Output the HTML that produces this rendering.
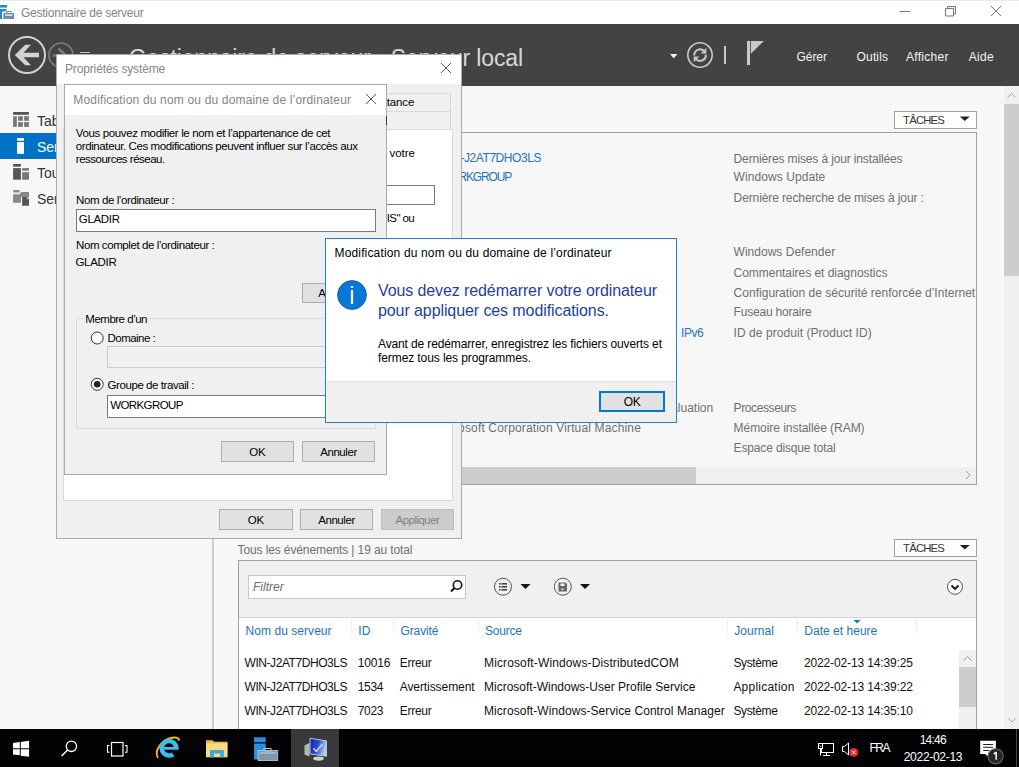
<!DOCTYPE html>
<html><head><meta charset="utf-8">
<style>
*{margin:0;padding:0;box-sizing:border-box}
html,body{width:1019px;height:767px;overflow:hidden;background:#f7f7f7;font-family:"Liberation Sans",sans-serif;font-size:12px;color:#000;position:relative}
.a{position:absolute}
.t{position:absolute;white-space:nowrap;line-height:1}
svg{position:absolute;overflow:visible}
</style></head><body>
<div class="a" style="left:0px;top:0px;width:1019px;height:24px;background:#fff"></div>
<div class="a" style="left:0px;top:0px;width:1019px;height:1px;background:#ececec"></div>
<svg style="left:0;top:0" width="16" height="24">
  <rect x="0" y="5" width="7" height="2.6" fill="#1e88dc"/>
  <path d="M0 9h7l-2 2.5h-3v7.5h-2z" fill="#1e88dc"/>
  <rect x="3.3" y="13" width="10.7" height="6" fill="#6d8ca5"/>
  <rect x="6.5" y="11.5" width="4.5" height="2" fill="none" stroke="#6d8ca5" stroke-width="1"/>
  <path d="M4.5 14.5h8.5l-1 1.2h-6.5z" fill="#fff"/>
</svg>
<div class="t" style="left:21px;top:6.54px;font-size:12px;color:#858585;;letter-spacing:-0.244px">Gestionnaire de serveur</div>
<svg style="left:890px;top:0" width="129" height="24">
  <path d="M10 11.5h10" stroke="#767676" stroke-width="1"/>
  <path d="M55.5 8.5h8v7.5h-8z M57.5 8.5v-2h8v7.5h-2" fill="none" stroke="#767676" stroke-width="1"/>
  <path d="M101 6l10 10M111 6l-10 10" stroke="#767676" stroke-width="1"/>
</svg>
<div class="a" style="left:0px;top:24px;width:1019px;height:62px;background:#434343"></div>
<svg style="left:0;top:24px" width="120" height="62">
  <circle cx="27" cy="31" r="18" fill="none" stroke="#d2d2d2" stroke-width="2"/>
  <path d="M14.8 31L25.3 20.8H31L23.5 28.7H39V33.3H23.5L31 41.2H25.3Z" fill="#d2d2d2"/>
  <circle cx="61" cy="31.2" r="12" fill="none" stroke="#7a7a7a" stroke-width="1.8"/>
  <path d="M52.5 31.5h14 M58.5 24.5l7.5 7" fill="none" stroke="#7a7a7a" stroke-width="2.6"/>
  <rect x="80" y="27.9" width="10" height="1.2" rx="0.5" fill="#c8c8c8"/>
</svg>
<div class="t" style="left:128.8px;top:46.53px;font-size:23px;color:#d8d8d8;;letter-spacing:-0.156px">Gestionnaire de serveur › Serveur local</div>
<svg style="left:660px;top:24px" width="120" height="62">
  <path d="M10 30h7.5l-3.75 4.2z" fill="#f2f2f2"/>
  <circle cx="40" cy="31" r="12.2" fill="none" stroke="#c9c9c9" stroke-width="1.6"/>
  <path d="M34.3 31.5A5.7 5.7 0 0 1 44.2 27.2" fill="none" stroke="#c9c9c9" stroke-width="2"/>
  <path d="M45.8 30.5A5.7 5.7 0 0 1 35.8 34.8" fill="none" stroke="#c9c9c9" stroke-width="2"/>
  <path d="M46.3 23.8v5.6h-5.6z" fill="#c9c9c9"/>
  <path d="M33.7 38.2v-5.6h5.6z" fill="#c9c9c9"/>
  <rect x="64" y="22" width="2" height="18" fill="#c9c9c9"/>
  <rect x="87" y="17" width="3" height="24" fill="#c9c9c9"/>
  <path d="M90.8 17h13l-13 12.8z" fill="#c9c9c9"/>
</svg>
<div class="t" style="left:796.5px;top:50.64px;font-size:12px;color:#f4f4f4;;letter-spacing:-0.047px">Gérer</div>
<div class="t" style="left:856.6px;top:50.64px;font-size:12px;color:#f4f4f4;;letter-spacing:0.142px">Outils</div>
<div class="t" style="left:906px;top:50.64px;font-size:12px;color:#f4f4f4;;letter-spacing:0.276px">Afficher</div>
<div class="t" style="left:968.8px;top:50.64px;font-size:12px;color:#f4f4f4;;letter-spacing:0.290px">Aide</div>
<div class="a" style="left:0px;top:86px;width:213px;height:643px;background:#f7f7f7"></div>
<div class="a" style="left:212px;top:86px;width:2px;height:643px;background:#cdcdcd"></div>
<div class="a" style="left:0px;top:133px;width:213px;height:26px;background:#0072c6"></div>
<svg style="left:0;top:0" width="40" height="220">
  <rect x="13.1" y="112" width="15.8" height="2.8" fill="#555"/>
  <rect x="13.1" y="116.2" width="3.7" height="10.7" fill="#777"/>
  <rect x="18.1" y="116.2" width="4.8" height="4.6" fill="#777"/><rect x="24.1" y="116.2" width="4.8" height="4.6" fill="#777"/>
  <rect x="18.1" y="122.1" width="4.8" height="4.8" fill="#777"/><rect x="24.1" y="122.1" width="4.8" height="4.8" fill="#777"/>
  <rect x="17" y="138" width="7" height="2.8" fill="#fff"/>
  <rect x="17" y="142" width="7" height="11.9" fill="#fff"/>
  <rect x="13.1" y="164" width="7.8" height="2.7" fill="#555"/>
  <rect x="13.1" y="168.1" width="7.8" height="11.6" fill="#555"/>
  <rect x="22.1" y="168.1" width="6.9" height="2.6" fill="#777"/>
  <rect x="22.1" y="172.2" width="6.9" height="7.5" fill="#777"/>
  <rect x="13.1" y="190" width="6.6" height="2.6" rx="1" fill="#888"/>
  <path d="M13.1 194.2h6.6l1.3-2.2h8v5h-8v5.8h-7.9z" fill="#888"/>
  <path d="M22.1 197h5l1.9 2v6.7h-6.9z" fill="#555"/>
  <path d="M26.8 197.6l1.6 1.6h-1.6z" fill="#fff"/>
</svg>
<div class="a" style="left:0;top:86px;width:213px;height:643px;overflow:hidden">
<div class="t" style="left:37px;top:28.15px;font-size:14px;color:#333;">Tableau de bord</div>
<div class="t" style="left:37px;top:54.15px;font-size:14px;color:#fff;">Serveur local</div>
<div class="t" style="left:37px;top:80.15px;font-size:14px;color:#333;">Tous les serveurs</div>
<div class="t" style="left:37px;top:106.15px;font-size:14px;color:#333;">Services de fichiers et de stockage</div>
</div>
<div class="a" style="left:1004px;top:86px;width:15px;height:643px;background:#f0f0f0"></div>
<div class="a" style="left:1004px;top:104px;width:15px;height:172px;background:#cdcdcd"></div>
<svg style="left:1004px;top:86px" width="15" height="643">
  <path d="M3.5 11.5l4-4 4 4" fill="none" stroke="#a3a3a3" stroke-width="1"/>
  <path d="M4.5 632.5l3.5 3.5 3.5-3.5" fill="none" stroke="#a3a3a3" stroke-width="1"/>
</svg>
<div class="a" style="left:894px;top:111px;width:83px;height:18px;background:#fff;border:1px solid #a0a0a0"></div>
<div class="t" style="left:903.1px;top:115.13px;font-size:11.3px;color:#333;;letter-spacing:-0.826px">TÂCHES</div>
<svg style="left:950px;top:111px" width="30" height="18"><path d="M9.8 5.5h10l-5 4.5z" fill="#222"/></svg>
<div class="a" style="left:238px;top:132px;width:739px;height:353px;background:#f7f7f7;border:1px solid #a0a0a0"></div>
<div class="t" style="right:478px;top:151.84px;font-size:12px;color:#1e73be;;letter-spacing:-0.439px">WIN-J2AT7DHO3LS</div>
<div class="t" style="right:508px;top:170.84px;font-size:12px;color:#1e73be;;letter-spacing:-1.168px">WORKGROUP</div>
<div class="a" style="left:239px;top:133px;width:737px;height:351px;overflow:hidden">
<div class="t" style="left:494.6px;top:19.54px;font-size:12px;color:#6f6f6f;;letter-spacing:-0.138px">Dernières mises à jour installées</div>
<div class="t" style="left:494.6px;top:38.34px;font-size:12px;color:#6f6f6f;;letter-spacing:0.075px">Windows Update</div>
<div class="t" style="left:494.6px;top:58.64px;font-size:12px;color:#6f6f6f;;letter-spacing:-0.108px">Dernière recherche de mises à jour :</div>
<div class="t" style="left:494.6px;top:113.44px;font-size:12px;color:#6f6f6f;;letter-spacing:0.014px">Windows Defender</div>
<div class="t" style="left:494.6px;top:133.54px;font-size:12px;color:#6f6f6f;;letter-spacing:-0.036px">Commentaires et diagnostics</div>
<div class="t" style="left:494.6px;top:153.64px;font-size:12px;color:#6f6f6f;;letter-spacing:0.017px">Configuration de sécurité renforcée d’Internet</div>
<div class="t" style="left:494.6px;top:173.14px;font-size:12px;color:#6f6f6f;;letter-spacing:-0.201px">Fuseau horaire</div>
<div class="t" style="left:494.6px;top:193.54px;font-size:12px;color:#6f6f6f;;letter-spacing:0.055px">ID de produit (Product ID)</div>
<div class="t" style="left:494.6px;top:269.14px;font-size:12px;color:#6f6f6f;;letter-spacing:-0.400px">Processeurs</div>
<div class="t" style="left:494.6px;top:289.04px;font-size:12px;color:#6f6f6f;;letter-spacing:-0.047px">Mémoire installée (RAM)</div>
<div class="t" style="left:494.6px;top:308.94px;font-size:12px;color:#6f6f6f;;letter-spacing:-0.153px">Espace disque total</div>
<div class="t" style="left:442px;top:193.54px;font-size:12px;color:#1e73be;;letter-spacing:-0.439px">IPv6</div>
<div class="t" style="right:262.79999999999995px;top:269.14px;font-size:12px;color:#6f6f6f;">Windows Server Évaluation</div>
<div class="t" style="right:335px;top:289.04px;font-size:12px;color:#6f6f6f;;letter-spacing:0.152px">Microsoft Corporation Virtual Machine</div>
</div>
<div class="a" style="left:239px;top:467px;width:737px;height:17px;background:#f0f0f0"></div>
<div class="a" style="left:239px;top:467px;width:457px;height:17px;background:#cdcdcd"></div>
<svg style="left:960px;top:466px" width="16" height="18"><path d="M6 5l4 4-4 4" fill="none" stroke="#999" stroke-width="1"/></svg>
<div class="t" style="left:237.5px;top:543.84px;font-size:12px;color:#6f6f6f;;letter-spacing:-0.111px">Tous les événements | 19 au total</div>
<div class="a" style="left:894px;top:539px;width:83px;height:18px;background:#fff;border:1px solid #a0a0a0"></div>
<div class="t" style="left:903.1px;top:543.13px;font-size:11.3px;color:#333;;letter-spacing:-0.826px">TÂCHES</div>
<svg style="left:950px;top:539px" width="30" height="18"><path d="M9.8 6h10l-5 4.5z" fill="#222"/></svg>
<div class="a" style="left:238px;top:560px;width:739px;height:180px;background:#fff;border:1px solid #a0a0a0"></div>
<div class="a" style="left:239px;top:561px;width:737px;height:57px;background:#f0f0f0;border-bottom:1px solid #d5d5d5"></div>
<div class="a" style="left:248px;top:575px;width:218px;height:24px;background:#fff;border:1px solid #c8c8c8"></div>
<div class="t" style="left:253px;top:581.34px;font-size:12px;color:#6d6d6d;font-style:italic">Filtrer</div>
<svg style="left:440px;top:575px" width="30" height="24">
  <circle cx="17.5" cy="10" r="4.2" fill="none" stroke="#111" stroke-width="1.6"/>
  <path d="M14.5 13l-3.5 3.5" stroke="#111" stroke-width="2"/>
</svg>
<svg style="left:490px;top:575px" width="110" height="24">
  <circle cx="13" cy="11.7" r="8.5" fill="none" stroke="#555" stroke-width="1"/>
  <rect x="9" y="8" width="1.6" height="1.6" fill="#444"/><rect x="11.5" y="8" width="5.5" height="1.6" fill="#444"/>
  <rect x="9" y="11" width="1.6" height="1.6" fill="#444"/><rect x="11.5" y="11" width="5.5" height="1.6" fill="#444"/>
  <rect x="9" y="14" width="1.6" height="1.6" fill="#444"/><rect x="11.5" y="14" width="5.5" height="1.6" fill="#444"/>
  <path d="M30.5 9h10l-5 5z" fill="#111"/>
  <circle cx="72.8" cy="11.7" r="8.5" fill="none" stroke="#555" stroke-width="1"/>
  <path d="M68.5 7.5h7l1.5 1.5v7.5h-8.5z" fill="#666"/>
  <rect x="70.5" y="8.5" width="4" height="2.5" fill="#f0f0f0"/>
  <rect x="71.5" y="13.5" width="2" height="1.5" fill="#f0f0f0"/>
  <path d="M90 9h10l-5 5z" fill="#111"/>
</svg>
<svg style="left:940px;top:575px" width="30" height="24">
  <circle cx="15" cy="11.8" r="7.5" fill="#fafafa" stroke="#555" stroke-width="1"/>
  <path d="M11.5 10.5l3.5 3.5 3.5-3.5" fill="none" stroke="#111" stroke-width="1.8"/>
</svg>
<div class="a" style="left:351px;top:619px;width:1px;height:22px;background:linear-gradient(#e8e8e8,#fff)"></div>
<div class="a" style="left:393px;top:619px;width:1px;height:22px;background:linear-gradient(#e8e8e8,#fff)"></div>
<div class="a" style="left:478px;top:619px;width:1px;height:22px;background:linear-gradient(#e8e8e8,#fff)"></div>
<div class="a" style="left:727px;top:619px;width:1px;height:22px;background:linear-gradient(#e8e8e8,#fff)"></div>
<div class="a" style="left:797px;top:619px;width:1px;height:22px;background:linear-gradient(#e8e8e8,#fff)"></div>
<div class="a" style="left:916px;top:619px;width:1px;height:22px;background:linear-gradient(#e8e8e8,#fff)"></div>
<div class="t" style="left:245.6px;top:624.84px;font-size:12px;color:#1e73be;;letter-spacing:0.048px">Nom du serveur</div>
<div class="t" style="left:358.3px;top:624.84px;font-size:12px;color:#1e73be;;letter-spacing:0.000px">ID</div>
<div class="t" style="left:400.5px;top:624.84px;font-size:12px;color:#1e73be;;letter-spacing:-0.115px">Gravité</div>
<div class="t" style="left:485px;top:624.84px;font-size:12px;color:#1e73be;;letter-spacing:-0.206px">Source</div>
<div class="t" style="left:734.3px;top:624.84px;font-size:12px;color:#1e73be;;letter-spacing:0.023px">Journal</div>
<div class="t" style="left:804.3px;top:624.84px;font-size:12px;color:#1e73be;;letter-spacing:0.023px">Date et heure</div>
<svg style="left:850px;top:619px" width="14" height="6"><path d="M3.5 1h7l-3.5 3.5z" fill="#1e73be"/></svg>
<div class="t" style="left:244.5px;top:656.84px;font-size:12px;color:#111;;letter-spacing:-0.431px">WIN-J2AT7DHO3LS</div>
<div class="t" style="left:357.8px;top:656.84px;font-size:12px;color:#111;;letter-spacing:-0.194px">10016</div>
<div class="t" style="left:399.7px;top:656.84px;font-size:12px;color:#111;;letter-spacing:-0.269px">Erreur</div>
<div class="t" style="left:484px;top:656.84px;font-size:12px;color:#111;;letter-spacing:0.129px">Microsoft-Windows-DistributedCOM</div>
<div class="t" style="left:733.4px;top:656.84px;font-size:12px;color:#111;;letter-spacing:-0.365px">Système</div>
<div class="t" style="left:803.9px;top:656.84px;font-size:12px;color:#111;;letter-spacing:-0.130px">2022-02-13 14:39:25</div>
<div class="t" style="left:244.5px;top:680.84px;font-size:12px;color:#111;;letter-spacing:-0.431px">WIN-J2AT7DHO3LS</div>
<div class="t" style="left:357.8px;top:680.84px;font-size:12px;color:#111;;letter-spacing:-0.368px">1534</div>
<div class="t" style="left:399.7px;top:680.84px;font-size:12px;color:#111;;letter-spacing:-0.076px">Avertissement</div>
<div class="t" style="left:484px;top:680.84px;font-size:12px;color:#111;;letter-spacing:-0.002px">Microsoft-Windows-User Profile Service</div>
<div class="t" style="left:733.4px;top:680.84px;font-size:12px;color:#111;;letter-spacing:0.228px">Application</div>
<div class="t" style="left:803.9px;top:680.84px;font-size:12px;color:#111;;letter-spacing:-0.130px">2022-02-13 14:39:22</div>
<div class="t" style="left:244.5px;top:704.84px;font-size:12px;color:#111;;letter-spacing:-0.431px">WIN-J2AT7DHO3LS</div>
<div class="t" style="left:357.8px;top:704.84px;font-size:12px;color:#111;;letter-spacing:-0.368px">7023</div>
<div class="t" style="left:399.7px;top:704.84px;font-size:12px;color:#111;;letter-spacing:-0.269px">Erreur</div>
<div class="t" style="left:484px;top:704.84px;font-size:12px;color:#111;;letter-spacing:0.066px">Microsoft-Windows-Service Control Manager</div>
<div class="t" style="left:733.4px;top:704.84px;font-size:12px;color:#111;;letter-spacing:-0.365px">Système</div>
<div class="t" style="left:803.9px;top:704.84px;font-size:12px;color:#111;;letter-spacing:-0.130px">2022-02-13 14:35:10</div>
<div class="a" style="left:959px;top:650px;width:17px;height:79px;background:#f0f0f0"></div>
<div class="a" style="left:959px;top:667px;width:17px;height:40px;background:#cdcdcd"></div>
<svg style="left:959px;top:650px" width="17" height="17"><path d="M4.5 10.5l4-4 4 4" fill="none" stroke="#999" stroke-width="1"/></svg>
<div class="a" style="left:0px;top:729px;width:1019px;height:38px;background:#030306"></div>
<div class="a" style="left:291px;top:729px;width:48px;height:38px;background:#393939"></div>
<svg style="left:0;top:729px" width="1019" height="38">
  <path d="M13 14l6.8-0.9v6.1h-6.8z M20.8 12.9l8.3-1.1v7.4h-8.3z M13 20.2h6.8v6.1l-6.8-0.9z M20.8 20.2h8.3v7.6l-8.3-1.1z" fill="#fff"/>
  <circle cx="71.4" cy="17.3" r="5.2" fill="none" stroke="#fff" stroke-width="1.3"/>
  <path d="M67.6 21l-6 6" stroke="#fff" stroke-width="1.5"/>
  <rect x="111.5" y="13.5" width="11.5" height="13.5" fill="none" stroke="#fff" stroke-width="1.2"/>
  <path d="M109.5 16.5h-2v6.8h2 M125 16.5h2v6.8h-2" fill="none" stroke="#fff" stroke-width="1.1"/>
  <!-- IE -->
  <path d="M158 28.8C153.5 22 162 10.5 172 8.8C176.5 8 179.5 8.8 178.7 11.8" fill="none" stroke="#f0bb27" stroke-width="1.9"/>
  <circle cx="169" cy="19.3" r="7.3" fill="none" stroke="#3dbdf0" stroke-width="4.5" stroke-dasharray="38.9 7" stroke-dashoffset="38.9"/>
  <rect x="162" y="18" width="16.5" height="2.7" fill="#3dbdf0"/>
  <!-- folder -->
  <path d="M206 11.2h6.5l1.5 1.6h13.6v3h-21.6z" fill="#e9bd55"/>
  <rect x="206" y="14.5" width="21.6" height="13.8" fill="#f9db7e"/>
  <path d="M210 21.1h13.8v7.5h-3.6v-4h-6.2v4h-4z" fill="#3aa6e6"/>
  <!-- server manager -->
  <rect x="254" y="8.3" width="11.7" height="5" fill="#2b8de0"/>
  <rect x="254" y="14.5" width="11.7" height="16" fill="#2b8de0"/>
  <rect x="258" y="21.5" width="19.7" height="10" fill="#7e97ac" stroke="#c8d3dc" stroke-width="0.8"/>
  <rect x="264" y="19.5" width="7" height="2.5" fill="none" stroke="#b9c6d1" stroke-width="1"/>
  <path d="M259.5 24h16.5" stroke="#c8d3dc" stroke-width="1"/>
  <!-- system props -->
  <defs><linearGradient id="mg" x1="0" y1="0" x2="1" y2="0.3"><stop offset="0" stop-color="#0a22b5"/><stop offset="0.55" stop-color="#2a4fd0"/><stop offset="1" stop-color="#b8c8f0"/></linearGradient></defs>
  <path d="M304.5 16.5l5-2.5v13.5l-5-2z" fill="#b5b8ba"/>
  <rect x="304.5" y="18.2" width="1.8" height="1.6" fill="#6fcf4f"/>
  <path d="M310 9.3l16.5 2.5v15.5l-16.5-2.5z" fill="url(#mg)" stroke="#c9cfd6" stroke-width="0.9"/>
  <path d="M313.5 19.2l2.8 3.2 6-7.4" fill="none" stroke="#dfe4ea" stroke-width="1.3"/>
  <ellipse cx="318.5" cy="29.6" rx="5.3" ry="2.1" fill="#cfd3d6"/>
  <!-- tray -->
  <rect x="821.5" y="14.5" width="12" height="9" fill="none" stroke="#fff" stroke-width="1"/>
  <rect x="818.5" y="14.5" width="4" height="5" fill="#030306" stroke="#fff" stroke-width="1"/>
  <path d="M819.6 16.6l1 1.2 1-1.2" fill="none" stroke="#fff" stroke-width="0.8"/>
  <path d="M820.5 19.5v7 M826.5 23.5v3 M823 26.5h7" fill="none" stroke="#fff" stroke-width="1"/>
  <path d="M842.5 17.5h2l4-3.5v12l-4-3.5h-2z" fill="none" stroke="#fff" stroke-width="1"/>
  <circle cx="853.7" cy="23.4" r="4.5" fill="#e0262d"/>
  <path d="M851.7 21.4l4 4 M855.7 21.4l-4 4" stroke="#fff" stroke-width="1"/>
  <path d="M980.2 11.8h15.7v13.1h-7l-1.7 2.1-2-2.1h-5z" fill="#fff"/>
  <path d="M983.2 15.5h9.8 M983.2 18.3h9.8 M983.2 21.5h6" stroke="#030306" stroke-width="0.9"/>
  <circle cx="995.6" cy="27.3" r="7.6" fill="#262626" stroke="#6a6a6a" stroke-width="1.1"/>
  <path d="M996.2 23v7.8 M993.8 25.2l2.4-2.2" fill="none" stroke="#f2f2f2" stroke-width="1.6"/>
  <rect x="1016" y="0" width="1" height="38" fill="#444"/>
</svg>
<div class="t" style="left:869.5px;top:742.44px;font-size:12px;color:#fff;;letter-spacing:-1.500px">FRA</div>
<div class="t" style="left:732.8px;width:400px;text-align:center;top:733.64px;font-size:12px;color:#fff;;letter-spacing:-0.758px">14:46</div>
<div class="t" style="left:733px;width:400px;text-align:center;top:751.24px;font-size:12px;color:#fff;;letter-spacing:-0.288px">2022-02-13</div>
<div class="a" style="left:56px;top:54px;width:406px;height:485px;background:#f0f0f0;border:1px solid #aaaaaa"></div>
<div class="a" style="left:57px;top:55px;width:404px;height:29px;background:#fff"></div>
<div class="t" style="left:65px;top:62.84px;font-size:12px;color:#858585;;letter-spacing:-0.147px">Propriétés système</div>
<svg style="left:440px;top:62px" width="12" height="12"><path d="M1 1l10 10M11 1l-10 10" stroke="#5a5a5a" stroke-width="1"/></svg>
<div class="a" style="left:63px;top:129px;width:390px;height:372px;background:#fff;border:1px solid #d9d9d9"></div>
<div class="a" style="left:300px;top:93px;width:151px;height:19px;background:#f0f0f0;border:1px solid #d9d9d9"></div>
<div class="a" style="left:300px;top:111px;width:151px;height:18px;background:#f0f0f0;border:1px solid #d9d9d9;border-bottom:none"></div>
<div class="t" style="right:604.8px;top:97.17px;font-size:11.5px;color:#000;letter-spacing:-0.15px">Utilisation à distance</div>
<div class="t" style="right:604px;top:147.67px;font-size:11.5px;color:#000;;letter-spacing:-0.006px">ier votre</div>
<div class="a" style="left:300px;top:185px;width:135px;height:20px;background:#fff;border:1px solid #7a7a7a"></div>
<div class="t" style="right:605px;top:213.47px;font-size:11.5px;color:#000;;letter-spacing:-0.614px">Serveur IIS&quot; ou</div>
<div class="a" style="left:219px;top:509px;width:74px;height:21px;background:#e1e1e1;border:1px solid #adadad"></div>
<div class="t" style="left:56px;width:400px;text-align:center;top:514.57px;font-size:11.5px;color:#000;;letter-spacing:-0.025px">OK</div>
<div class="a" style="left:300px;top:509px;width:73px;height:21px;background:#e1e1e1;border:1px solid #adadad"></div>
<div class="t" style="left:136.5px;width:400px;text-align:center;top:514.57px;font-size:11.5px;color:#000;;letter-spacing:-0.440px">Annuler</div>
<div class="a" style="left:381px;top:509px;width:73px;height:21px;background:#cccccc;border:1px solid #bfbfbf"></div>
<div class="t" style="left:217.5px;width:400px;text-align:center;top:514.57px;font-size:11.5px;color:#838383;;letter-spacing:-0.537px">Appliquer</div>
<div class="a" style="left:64px;top:84px;width:323px;height:391px;background:#f0f0f0;border:1px solid #aaaaaa"></div>
<div class="a" style="left:65px;top:85px;width:321px;height:30px;background:#fff"></div>
<div class="a" style="left:386px;top:116px;width:1px;height:9px;background:#34346e"></div>
<div class="t" style="left:73.3px;top:93.54px;font-size:12px;color:#858585;;letter-spacing:0.171px">Modification du nom ou du domaine de l’ordinateur</div>
<svg style="left:365px;top:93px" width="12" height="12"><path d="M1 1l10 10M11 1l-10 10" stroke="#5a5a5a" stroke-width="1"/></svg>
<div class="t" style="left:75.8px;top:127.77px;font-size:11.5px;color:#000;;letter-spacing:-0.371px">Vous pouvez modifier le nom et l’appartenance de cet</div>
<div class="t" style="left:75.8px;top:140.77px;font-size:11.5px;color:#000;;letter-spacing:-0.400px">ordinateur. Ces modifications peuvent influer sur l’accès aux</div>
<div class="t" style="left:75.8px;top:153.77px;font-size:11.5px;color:#000;;letter-spacing:-0.494px">ressources réseau.</div>
<div class="t" style="left:76px;top:194.87px;font-size:11.5px;color:#000;;letter-spacing:-0.398px">Nom de l’ordinateur :</div>
<div class="a" style="left:76px;top:209px;width:300px;height:23px;background:#fff;border:1px solid #7a7a7a"></div>
<div class="t" style="left:78.8px;top:213.97px;font-size:11.5px;color:#000;;letter-spacing:-0.326px">GLADIR</div>
<div class="t" style="left:76px;top:240.07px;font-size:11.5px;color:#000;;letter-spacing:-0.408px">Nom complet de l’ordinateur :</div>
<div class="t" style="left:75.5px;top:257.07px;font-size:11.5px;color:#000;;letter-spacing:-0.326px">GLADIR</div>
<div class="a" style="left:302px;top:283px;width:74px;height:20px;background:#e1e1e1;border:1px solid #adadad"></div>
<div class="t" style="left:139px;width:400px;text-align:center;top:288.07px;font-size:11.5px;color:#000;letter-spacing:-0.15px">Autres...</div>
<div class="a" style="left:76px;top:318px;width:300px;height:111px;border:1px solid #dcdcdc"></div>
<div class="a" style="left:83px;top:312px;width:64px;height:12px;background:#f0f0f0"></div>
<div class="t" style="left:85.3px;top:313.87px;font-size:11.5px;color:#000;;letter-spacing:-0.492px">Membre d’un</div>
<svg style="left:88px;top:328px" width="20" height="64">
  <circle cx="9.2" cy="10" r="6" fill="#fff" stroke="#333" stroke-width="1"/>
  <circle cx="9.2" cy="56.3" r="6" fill="#fff" stroke="#333" stroke-width="1"/>
  <circle cx="9.2" cy="56.3" r="3.3" fill="#222"/>
</svg>
<div class="t" style="left:107.6px;top:333.27px;font-size:11.5px;color:#000;;letter-spacing:-0.553px">Domaine :</div>
<div class="a" style="left:107px;top:346px;width:259px;height:22px;background:#f0f0f0;border:1px solid #cccccc"></div>
<div class="t" style="left:107.6px;top:379.57px;font-size:11.5px;color:#000;;letter-spacing:-0.434px">Groupe de travail :</div>
<div class="a" style="left:107px;top:395px;width:259px;height:23px;background:#fff;border:1px solid #7a7a7a"></div>
<div class="t" style="left:110.2px;top:400.37px;font-size:11.5px;color:#000;;letter-spacing:-0.594px">WORKGROUP</div>
<div class="a" style="left:221px;top:441px;width:73px;height:21px;background:#e1e1e1;border:1px solid #adadad"></div>
<div class="t" style="left:57.5px;width:400px;text-align:center;top:446.57px;font-size:11.5px;color:#000;;letter-spacing:-0.025px">OK</div>
<div class="a" style="left:302px;top:441px;width:73px;height:21px;background:#e1e1e1;border:1px solid #adadad"></div>
<div class="t" style="left:138.5px;width:400px;text-align:center;top:446.57px;font-size:11.5px;color:#000;;letter-spacing:-0.440px">Annuler</div>
<div class="a" style="left:325px;top:238px;width:352px;height:185px;background:#fff;border:1px solid #1883d7"></div>
<div class="a" style="left:326px;top:381px;width:350px;height:41px;background:#f0f0f0;border-top:1px solid #dfdfdf"></div>
<div class="t" style="left:334.5px;top:247.04px;font-size:12px;color:#000;;letter-spacing:0.156px">Modification du nom ou du domaine de l’ordinateur</div>
<svg style="left:337px;top:280px" width="30" height="30">
  <circle cx="15" cy="15" r="14.4" fill="#0a76d6" stroke="#0b5c9f" stroke-width="0.9"/>
  <rect x="13.9" y="6.1" width="2.2" height="1.9" fill="#fff"/>
  <rect x="13.9" y="10.1" width="2.2" height="13.9" fill="#fff"/>
</svg>
<div class="t" style="left:378px;top:283.46px;font-size:16px;color:#1e3fa0;;letter-spacing:-0.103px">Vous devez redémarrer votre ordinateur</div>
<div class="t" style="left:378px;top:303.46px;font-size:16px;color:#1e3fa0;;letter-spacing:-0.091px">pour appliquer ces modifications.</div>
<div class="t" style="left:378px;top:337.84px;font-size:12px;color:#000;;letter-spacing:-0.132px">Avant de redémarrer, enregistrez les fichiers ouverts et</div>
<div class="t" style="left:378px;top:352.34px;font-size:12px;color:#000;;letter-spacing:-0.092px">fermez tous les programmes.</div>
<div class="a" style="left:599px;top:391px;width:66px;height:21px;background:#e1e1e1;border:2px solid #0078d7"></div>
<div class="t" style="left:432px;width:400px;text-align:center;top:396.04px;font-size:12px;color:#000;;letter-spacing:-0.344px">OK</div>
</body></html>
